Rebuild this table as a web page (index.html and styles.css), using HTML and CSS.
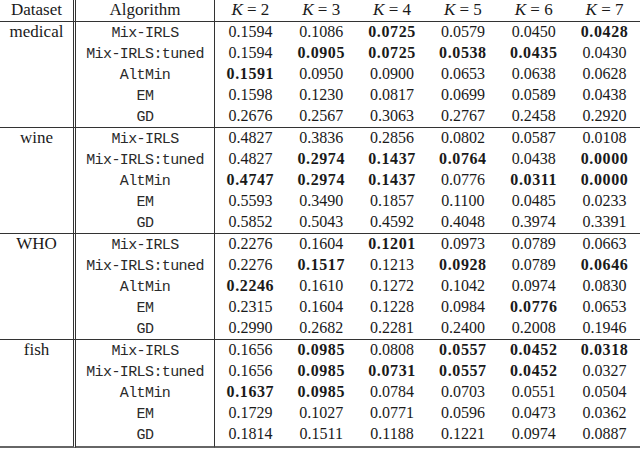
FILE: index.html
```html
<!DOCTYPE html>
<html lang="en">

<head>
    <meta charset="UTF-8">
    <title>Results table</title>
    <link rel="stylesheet" href="styles.css">
</head>

<body>

    <table class="results">
        <colgroup>
            <col class="col-data">
            <col class="col-algo">
            <col><col><col><col><col><col>
        </colgroup>
        <thead>
            <tr>
                <th class="data">Dataset</th>
                <th class="algo">Algorithm</th>
                <th><i>K</i> = 2</th>
                <th><i>K</i> = 3</th>
                <th><i>K</i> = 4</th>
                <th><i>K</i> = 5</th>
                <th><i>K</i> = 6</th>
                <th><i>K</i> = 7</th>
            </tr>
        </thead>
        <tbody>
            <tr>
                <td class="data">medical</td>
                <td class="algo">Mix-IRLS</td>
                <td>0.1594</td><td>0.1086</td><td class="best">0.0725</td><td>0.0579</td><td>0.0450</td><td class="best">0.0428</td>
            </tr>
            <tr>
                <td class="data"></td>
                <td class="algo">Mix-IRLS:tuned</td>
                <td>0.1594</td><td class="best">0.0905</td><td class="best">0.0725</td><td class="best">0.0538</td><td class="best">0.0435</td><td>0.0430</td>
            </tr>
            <tr>
                <td class="data"></td>
                <td class="algo">AltMin</td>
                <td class="best">0.1591</td><td>0.0950</td><td>0.0900</td><td>0.0653</td><td>0.0638</td><td>0.0628</td>
            </tr>
            <tr>
                <td class="data"></td>
                <td class="algo">EM</td>
                <td>0.1598</td><td>0.1230</td><td>0.0817</td><td>0.0699</td><td>0.0589</td><td>0.0438</td>
            </tr>
            <tr>
                <td class="data"></td>
                <td class="algo">GD</td>
                <td>0.2676</td><td>0.2567</td><td>0.3063</td><td>0.2767</td><td>0.2458</td><td>0.2920</td>
            </tr>

            <tr class="group">
                <td class="data">wine</td>
                <td class="algo">Mix-IRLS</td>
                <td>0.4827</td><td>0.3836</td><td>0.2856</td><td>0.0802</td><td>0.0587</td><td>0.0108</td>
            </tr>
            <tr>
                <td class="data"></td>
                <td class="algo">Mix-IRLS:tuned</td>
                <td>0.4827</td><td class="best">0.2974</td><td class="best">0.1437</td><td class="best">0.0764</td><td>0.0438</td><td class="best">0.0000</td>
            </tr>
            <tr>
                <td class="data"></td>
                <td class="algo">AltMin</td>
                <td class="best">0.4747</td><td class="best">0.2974</td><td class="best">0.1437</td><td>0.0776</td><td class="best">0.0311</td><td class="best">0.0000</td>
            </tr>
            <tr>
                <td class="data"></td>
                <td class="algo">EM</td>
                <td>0.5593</td><td>0.3490</td><td>0.1857</td><td>0.1100</td><td>0.0485</td><td>0.0233</td>
            </tr>
            <tr>
                <td class="data"></td>
                <td class="algo">GD</td>
                <td>0.5852</td><td>0.5043</td><td>0.4592</td><td>0.4048</td><td>0.3974</td><td>0.3391</td>
            </tr>

            <tr class="group">
                <td class="data">WHO</td>
                <td class="algo">Mix-IRLS</td>
                <td>0.2276</td><td>0.1604</td><td class="best">0.1201</td><td>0.0973</td><td>0.0789</td><td>0.0663</td>
            </tr>
            <tr>
                <td class="data"></td>
                <td class="algo">Mix-IRLS:tuned</td>
                <td>0.2276</td><td class="best">0.1517</td><td>0.1213</td><td class="best">0.0928</td><td>0.0789</td><td class="best">0.0646</td>
            </tr>
            <tr>
                <td class="data"></td>
                <td class="algo">AltMin</td>
                <td class="best">0.2246</td><td>0.1610</td><td>0.1272</td><td>0.1042</td><td>0.0974</td><td>0.0830</td>
            </tr>
            <tr>
                <td class="data"></td>
                <td class="algo">EM</td>
                <td>0.2315</td><td>0.1604</td><td>0.1228</td><td>0.0984</td><td class="best">0.0776</td><td>0.0653</td>
            </tr>
            <tr>
                <td class="data"></td>
                <td class="algo">GD</td>
                <td>0.2990</td><td>0.2682</td><td>0.2281</td><td>0.2400</td><td>0.2008</td><td>0.1946</td>
            </tr>

            <tr class="group">
                <td class="data">fish</td>
                <td class="algo">Mix-IRLS</td>
                <td>0.1656</td><td class="best">0.0985</td><td>0.0808</td><td class="best">0.0557</td><td class="best">0.0452</td><td class="best">0.0318</td>
            </tr>
            <tr>
                <td class="data"></td>
                <td class="algo">Mix-IRLS:tuned</td>
                <td>0.1656</td><td class="best">0.0985</td><td class="best">0.0731</td><td class="best">0.0557</td><td class="best">0.0452</td><td>0.0327</td>
            </tr>
            <tr>
                <td class="data"></td>
                <td class="algo">AltMin</td>
                <td class="best">0.1637</td><td class="best">0.0985</td><td>0.0784</td><td>0.0703</td><td>0.0551</td><td>0.0504</td>
            </tr>
            <tr>
                <td class="data"></td>
                <td class="algo">EM</td>
                <td>0.1729</td><td>0.1027</td><td>0.0771</td><td>0.0596</td><td>0.0473</td><td>0.0362</td>
            </tr>
            <tr class="last">
                <td class="data"></td>
                <td class="algo">GD</td>
                <td>0.1814</td><td>0.1511</td><td>0.1188</td><td>0.1221</td><td>0.0974</td><td>0.0887</td>
            </tr>
        </tbody>
    </table>

</body>

</html>
```

FILE: styles.css
```css
body {
    margin: 0;
    padding: 0;
    background: white;
    color: #1a1a1a;
    font-family: "Liberation Serif", "Times New Roman", serif;
    font-size: 16px;
}

.results {
    width: 640px;
    table-layout: fixed;
    border-collapse: separate;
    border-spacing: 0;
}

.col-data {
    width: 76px;
}

.col-algo {
    width: 139px;
}

.results th,
.results td {
    padding: 0;
    height: 21px;
    line-height: 20px;
    text-align: center;
    vertical-align: baseline;
    font-weight: normal;
    white-space: nowrap;
}

.results th {
    font-size: 17px;
    border-bottom: 1px solid #333;
}

.results .data {
    border-right: 3px double #333;
    font-size: 17px;
}

.results .algo {
    border-right: 1px solid #333;
    font-family: "Liberation Mono", "Courier New", monospace;
    font-size: 15px;
    letter-spacing: -0.6px;
    line-height: 16px;
    color: #2a2a2a;
}

.results th.algo {
    font-family: "Liberation Serif", "Times New Roman", serif;
    font-size: 17px;
    letter-spacing: 0;
    line-height: 20px;
    color: #1a1a1a;
}

.results .best {
    font-weight: bold;
    letter-spacing: 0.6px;
}

.results tr.group td {
    border-top: 1px solid #333;
}

.results tr.last td {
    height: 22px;
    border-bottom: 2px solid #666;
}
```
